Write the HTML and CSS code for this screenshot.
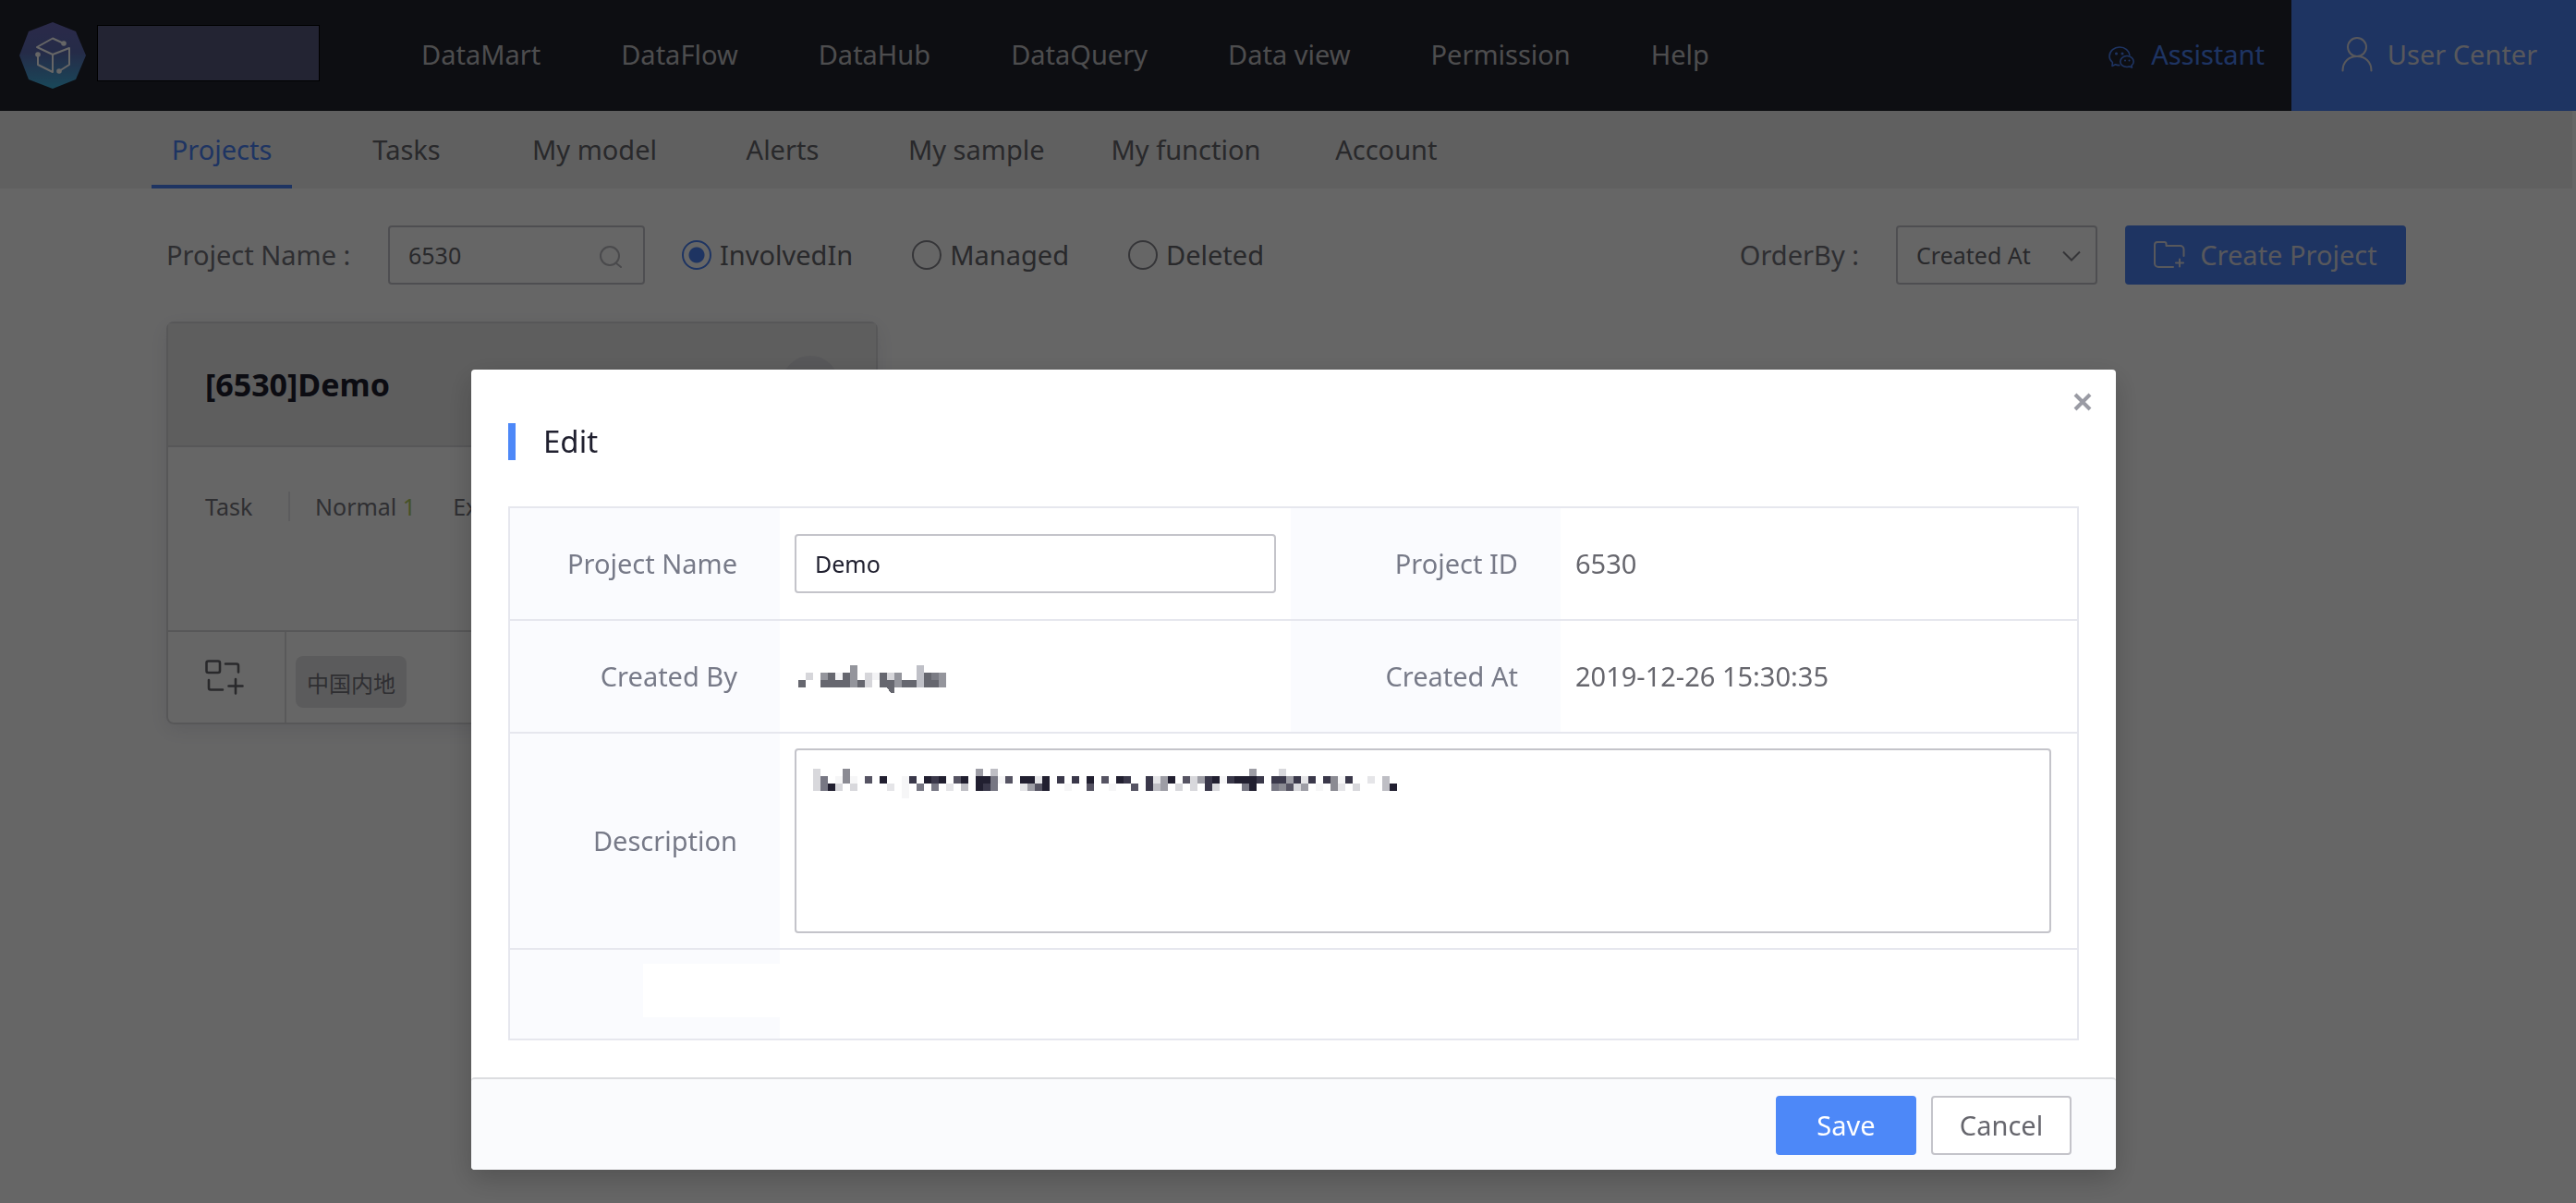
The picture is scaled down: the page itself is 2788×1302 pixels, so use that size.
FILE: index.html
```html
<!DOCTYPE html>
<html lang="en">
<head>
<meta charset="utf-8">
<title>Projects</title>
<meta name="viewport" content="width=device-width, initial-scale=1">
<link rel="stylesheet" href="styles.css">
</head>
<body>
<header class="topbar">
  <a class="brand" href="#" aria-label="Home">
    <svg class="brand-logo" viewBox="0 0 72 72" aria-hidden="true">
      <defs>
        <linearGradient id="logoFill" x1="0" y1="0" x2="0" y2="1">
          <stop offset="0" stop-color="#6b69b8"/>
          <stop offset="0.45" stop-color="#5d6cb4"/>
          <stop offset="1" stop-color="#40b4e0"/>
        </linearGradient>
      </defs>
      <path d="M36 0 61 10 72 36 61 62 36 72 10 62 0 36 10 10Z" fill="url(#logoFill)"/>
      <g fill="none" stroke="#fff" stroke-width="2" stroke-linejoin="round" stroke-linecap="round">
        <path d="M48 23 36 17.500 19 27 36 35 54 28 54 46 43 53"/>
        <path d="M36 35V54L20 46V35"/>
      </g>
      <g fill="#fff"><circle cx="48" cy="23" r="2.800"/><circle cx="20" cy="35" r="2.800"/><circle cx="43" cy="53" r="2.800"/></g>
    </svg>
    <span class="brand-name"></span>
  </a>
  <nav class="mainnav" aria-label="Main">
    <a href="#">DataMart</a>
    <a href="#">DataFlow</a>
    <a href="#">DataHub</a>
    <a href="#">DataQuery</a>
    <a href="#">Data view</a>
    <a href="#">Permission</a>
    <a href="#">Help</a>
  </nav>
  <a class="assistant" href="#">
    <svg class="icon-chat" viewBox="0 0 28 24" fill="none" stroke="currentColor" stroke-width="1.600" stroke-linejoin="round" aria-hidden="true">
      <path d="M12.500 20.500c-2 .3-3.500 0-5-.7L4 21.500l.4-4C2 15.500 1 13.500 1 11 1 5.500 6 1 12 1s10.500 4 11 9"/>
      <path d="M20 10.500c-4 0-7.200 2.800-7.200 6.200S16 22.500 20 22.500c1 0 1.800-.1 2.600-.4l2.800 1-.4-2.300c1.500-1.100 2.200-2.500 2.200-4.100 0-3.400-3.200-6.200-7.200-6.200Z"/>
      <g fill="currentColor" stroke="none"><circle cx="8.500" cy="8" r="1.500"/><circle cx="15" cy="8" r="1.500"/><circle cx="18" cy="15.500" r="1"/><circle cx="22.500" cy="15.500" r="1"/></g>
    </svg>
    Assistant
  </a>
  <a class="usercenter" href="#">
    <svg class="icon-user" viewBox="0 0 34 38" fill="none" stroke="currentColor" stroke-width="2" stroke-linecap="round" aria-hidden="true">
      <circle cx="17" cy="11" r="10"/>
      <path d="M1.500 36.500C1.500 27 8 21 17 21s15.500 6 15.500 15.500"/>
    </svg>
    User Center
  </a>
</header>

<nav class="subnav" aria-label="User center">
  <a class="active" href="#" aria-current="page">Projects</a>
  <a href="#">Tasks</a>
  <a href="#">My model</a>
  <a href="#">Alerts</a>
  <a href="#">My sample</a>
  <a href="#">My function</a>
  <a href="#">Account</a>
</nav>

<main class="content">
  <form class="filters">
    <label class="filter-label" for="search">Project Name :</label>
    <div class="searchbox">
      <input id="search" type="text" value="6530">
      <svg viewBox="0 0 26 24" fill="none" stroke="currentColor" stroke-width="2" stroke-linecap="round" aria-hidden="true">
        <circle cx="12" cy="11" r="10"/><path d="M18.500 18.500 24 23"/>
      </svg>
    </div>
    <div class="radios">
      <label><input type="radio" name="scope" checked>InvolvedIn</label>
      <label><input type="radio" name="scope">Managed</label>
      <label><input type="radio" name="scope">Deleted</label>
    </div>
    <label class="order-label" for="order">OrderBy :</label>
    <div class="selectbox">
      <select id="order"><option>Created At</option></select>
      <svg viewBox="0 0 20 12" fill="none" stroke="currentColor" stroke-width="2" aria-hidden="true"><path d="M1 1.500 10 10.500 19 1.500"/></svg>
    </div>
    <button class="create" type="button">
      <svg viewBox="0 0 34 30" fill="none" stroke="currentColor" stroke-width="2" stroke-linejoin="round" stroke-linecap="round" aria-hidden="true">
        <path d="M21 28H5a4 4 0 0 1-4-4V4a3 3 0 0 1 3-3h7.500a2 2 0 0 1 2 2v2h15a4 4 0 0 1 4 4v7"/>
        <path d="M28 19.500v8M24 23.500h8"/>
      </svg>
      Create Project
    </button>
  </form>

  <article class="card">
    <header class="card-head">
      <h2>[6530]Demo</h2>
      <span class="card-badge"></span>
    </header>
    <div class="card-body">
      <div class="stats">
        <span class="stat-name">Task</span>
        <span>Normal <b>1</b></span>
        <span>Exception</span>
      </div>
    </div>
    <footer class="card-foot">
      <a class="card-action" href="#" aria-label="Add node">
        <svg viewBox="0 0 42 38" fill="none" stroke="currentColor" stroke-width="2.600" stroke-linejoin="round" stroke-linecap="round" aria-hidden="true">
          <rect x="1.500" y="1.500" width="14.500" height="12.500" rx="2"/>
          <path d="M22 4.500H34a2 2 0 0 1 2 2V13.500M4 22v8.500a2 2 0 0 0 2 2H19M33 21v15.500M25.500 28.500H40.500"/>
        </svg>
      </a>
      <span class="tag" lang="zh">中国内地</span>
    </footer>
  </article>
</main>

<div class="overlay">
  <section class="modal" role="dialog" aria-modal="true" aria-labelledby="dialogTitle">
    <button class="close" type="button" aria-label="Close">
      <svg viewBox="0 0 20 20" fill="none" stroke="currentColor" stroke-width="4" aria-hidden="true"><path d="M2 2 18 18M18 2 2 18"/></svg>
    </button>
    <div class="modal-body">
      <h1 id="dialogTitle">Edit</h1>
      <table class="details">
        <colgroup><col class="col-label"><col class="col-value"><col class="col-label"><col></colgroup>
        <tbody>
        <tr>
          <th scope="row"><label for="name">Project Name</label></th>
          <td><input id="name" class="name" type="text" value="Demo"></td>
          <th scope="row">Project ID</th>
          <td>6530</td>
        </tr>
        <tr>
          <th scope="row">Created By</th>
          <td>
            <svg class="mosaic creator" viewBox="0 0 20 4" fill="none" shape-rendering="crispEdges" aria-hidden="true">
              <path stroke="#66676f" d="M0 2.500h1M3 2.500h4M8 2.500h1M4 1.500h1M6 1.500h1M11 1.500h1M11 2.500h2M14 2.500h2M17 1.500h1M17 2.500h1M18 2.500h1"/>
              <path stroke="#7b7c84" d="M18 1.500h1"/>
              <path stroke="#94959c" d="M3 1.500h1M7 .5h1M7 1.500h1M7 2.500h1M13 1.500h1M13 2.500h1M19 1.500h1M19 2.500h1"/>
              <path stroke="#bfc0c7" d="M16 .5h1M16 1.500h1M16 2.500h1"/>
              <path stroke="#d6d6da" d="M1 1.500h1M9 1.500h1M9 2.500h1M12 1.500h1"/>
              <path stroke="#f3f3f5" d="M5 1.500h1M10 1.500h1"/>
              <path fill="#66676f" stroke="none" d="M12 3h1v.700h-.5Z"/>
            </svg>
          </td>
          <th scope="row">Created At</th>
          <td>2019-12-26 15:30:35</td>
        </tr>
        <tr class="row-desc">
          <th scope="row"><label for="desc">Description</label></th>
          <td colspan="3">
            <div class="desc">
              <textarea id="desc"></textarea>
              <svg class="mosaic summary" viewBox="0 0 79 4" fill="none" shape-rendering="crispEdges" aria-hidden="true">
                <path stroke="#211f30" d="M9 1.500h1M15 1.500h1M17 1.500h1M20 1.500h1M22 1.500h2M28 1.500h2M31 1.500h1M37 1.500h1M41 1.500h1M48 1.500h1M54 1.500h1M57 1.500h3M2 2.500h1M22 2.500h1M31 2.500h1M59 2.500h1M78 2.500h1"/>
                <path stroke="#3a384a" d="M16 1.500h1M13 1.500h1M33 1.500h1M35 1.500h1M42 1.500h1M45 1.500h1M53 1.500h1M56 1.500h1M60 1.500h1M62 1.500h2M65 1.500h1M67 1.500h1M69 1.500h1M72 1.500h1M23 2.500h1M45 2.500h1M53 2.500h1"/>
                <path stroke="#565463" d="M7 1.500h1M19 1.500h1M26 1.500h1M39 1.500h1M50 1.500h1M30 2.500h1M37 2.500h1M43 2.500h1M64 2.500h1"/>
                <path stroke="#777783" d="M1 1.500h1M1 2.500h1M24 1.500h1M24 2.500h1M14 2.500h1M16 2.500h1M58 2.500h1M62 2.500h1"/>
                <path stroke="#8b8b93" d="M4 .5h1M4 1.500h1M70 1.500h1M70 2.500h1M63 2.500h1"/>
                <path stroke="#9d9da5" d="M22 .5h1M59 .5h1M47 1.500h1M47 2.500h1M52 1.500h1M64 1.500h1M29 2.500h1M66 2.500h1"/>
                <path stroke="#bebec4" d="M24 .5h1M77 1.500h1M77 2.500h1M20 2.500h1M46 2.500h1"/>
                <path stroke="#d8d8dc" d="M0 .5h1M0 1.500h1M0 2.500h1M63 .5h1M51 1.500h1M51 2.500h1M3 2.500h1M5 2.500h1M49 2.500h1M54 2.500h1M65 2.500h1M73 2.500h1"/>
                <path stroke="#e5e5e8" d="M30 1.500h1M46 1.500h1M66 1.500h1M75 1.500h1M10 2.500h1M18 2.500h1M28 2.500h1M71 2.500h1"/>
                <path stroke="#f6f6f7" d="M3 1.500h1M5 1.500h1M12 1.500h1M12 2.500h1M12 3.500h1M25 1.500h1M55 1.500h1M71 1.500h1M34 2.500h1M40 2.500h1M68 2.500h1"/>
              </svg>
            </div>
          </td>
        </tr>
        <tr class="row-last">
          <th class="blank"><div></div></th>
          <td colspan="3"></td>
        </tr>
        </tbody>
      </table>
    </div>
    <footer class="modal-foot">
      <button class="btn primary" type="button">Save</button>
      <button class="btn" type="button">Cancel</button>
    </footer>
  </section>
</div>
</body>
</html>
```
FILE: styles.css
```css
* { box-sizing: border-box; }

body {
  margin: 0;
  min-height: 100vh;
  background: #fff;
  color: #66666d;
  font: 29px/40px "Noto Sans", "Noto Sans CJK SC", sans-serif;
}
a { color: inherit; text-decoration: none; }
input, select, textarea, button { font: inherit; color: inherit; margin: 0; }
svg { display: block; flex: none; }

/* Top bar */
.topbar {
  display: flex;
  height: 120px;
  background: #21232f;
  color: #c0c0c4;
}
.brand { display: flex; align-items: center; gap: 12px; padding-left: 21px; width: 456px; }
.brand-logo { width: 72px; height: 72px; }
.brand-name {
  width: 241px;
  height: 61px;
  margin-bottom: 5px;
  background: #575a80;
  border: 1px solid #000;
}
.mainnav { display: flex; align-items: center; gap: 87px; flex: 1; padding-bottom: 2px; white-space: nowrap; }
.assistant {
  display: flex;
  align-items: center;
  gap: 18px;
  padding: 0 29px 2px 0;
  color: #4b82f5;
}
.icon-chat { width: 28px; height: 24px; margin-top: 5px; }
.usercenter {
  display: flex;
  align-items: center;
  justify-content: center;
  gap: 16px;
  width: 308px;
  padding: 0 0 2px 12px;
  background: #4b82f5;
  color: #dcdce6;
}
.icon-user { width: 34px; height: 38px; }

/* Section tabs */
.subnav {
  display: flex;
  gap: 48px;
  height: 84px;
  margin-right: 4px;
  padding-left: 164px;
  background: #f0f0f0;
}
.subnav a {
  display: flex;
  align-items: center;
  justify-content: center;
  min-width: 152px;
  padding: 0 12px;
  border: solid transparent;
  border-width: 4px 0;
  white-space: nowrap;
}
.subnav .active { color: #4b82f5; border-bottom-color: #4b82f5; }

/* Filters */
.content { padding: 40px 184px 40px 180px; }
.filters { display: flex; align-items: center; height: 64px; margin-bottom: 40px; white-space: nowrap; }
.filter-label { width: 240px; color: #73737c; }
.searchbox, .selectbox { position: relative; font-size: 25px; }
.searchbox { width: 278px; }
.selectbox { width: 218px; margin-right: 30px; }
.searchbox input, .selectbox select {
  display: block;
  width: 100%;
  height: 64px;
  padding: 0 20px;
  border: 2px solid #c4c4ca;
  border-radius: 4px;
  background: #fff;
  appearance: none;
}
.searchbox svg { position: absolute; right: 24px; top: 22px; width: 26px; height: 24px; color: #b8b8be; }
.selectbox svg { position: absolute; right: 18px; top: 27px; width: 20px; height: 12px; color: #84848c; pointer-events: none; }
.radios { display: flex; gap: 64px; flex: 1; padding-left: 40px; }
.radios label { display: flex; align-items: center; gap: 9px; }
.radios input {
  width: 32px;
  height: 32px;
  border: 2px solid #85858c;
  border-radius: 50%;
  appearance: none;
}
.radios input:checked {
  border-color: #4b82f5;
  background: radial-gradient(circle, #4b82f5 8px, transparent 9px);
}
.order-label { margin-right: 40px; color: #73737c; }
.create {
  display: flex;
  align-items: center;
  justify-content: center;
  gap: 16px;
  width: 304px;
  height: 64px;
  padding: 0;
  border: 0;
  border-radius: 4px;
  background: #4b82f5;
  color: #dcdce6;
}
.create svg { width: 34px; height: 30px; }

/* Project card */
.card {
  max-width: 770px;
  border: 2px solid #d9d9dc;
  border-radius: 8px;
  box-shadow: 0 6px 20px rgba(80, 80, 120, .12);
  color: #75757d;
  font-size: 25px;
}
.card-head {
  display: flex;
  align-items: center;
  justify-content: space-between;
  height: 134px;
  padding: 0 40px;
  border-bottom: 2px solid #d9d9dc;
  background: #ebebeb;
}
.card-head h2 { margin: 0; font-size: 34px; color: #20202f; }
.card-badge { width: 62px; height: 62px; border-radius: 50%; background: #dcdce0; }
.card-body { height: 198px; padding: 48px 40px; }
.stats { display: flex; gap: 40px; line-height: 32px; white-space: nowrap; }
.stat-name { width: 92px; margin-right: -13px; border-right: 2px solid #e6e6ea; }
.stats b { color: #b0cc60; font-weight: 400; }
.card-foot { display: flex; align-items: center; height: 100px; border-top: 2px solid #d9d9dc; }
.card-action { display: flex; align-items: center; width: 128px; height: 98px; padding-left: 40px; border-right: 2px solid #dedee2; color: #66666d; }
.card-action svg { width: 42px; height: 38px; }
.tag {
  margin: 10px 0 0 10px;
  padding: 10px 12px 6px;
  border-radius: 8px;
  background: #e4e4e6;
  font-size: 24px;
}

/* Dialog */
.overlay {
  position: fixed;
  inset: 0;
  display: flex;
  align-items: flex-start;
  justify-content: center;
  padding: 400px 0 36px 12px;
  background: rgba(0, 0, 0, .6);
  overflow: auto;
}
.modal {
  position: relative;
  width: 100%;
  max-width: 1780px;
  border-radius: 4px;
  background: #fff;
  box-shadow: 0 10px 30px rgba(0, 0, 0, .2);
}
.modal-body { padding: 58px 40px 40px; }
.modal h1 {
  margin: 0 0 50px;
  padding-left: 30px;
  border-left: 8px solid #4d88f8;
  color: #20202f;
  font-size: 33px;
  font-weight: 400;
  line-height: 40px;
}
.close { position: absolute; top: 15px; right: 16px; padding: 10px; border: 0; background: none; color: #9a9ba4; }
.close svg { width: 20px; height: 20px; }

.details { width: 100%; table-layout: fixed; border: 2px solid #e6e7ee; border-spacing: 0; }
.col-label { width: 292px; }
.col-value { width: 553px; }
.details th, .details td { height: 122px; padding: 0 16px; border-top: 2px solid #e6e7ee; }
.details tr:first-child > * { height: 120px; border-top: 0; }
.details th { padding-right: 46px; background: #fafbfe; color: #777a88; font-weight: 400; text-align: right; }
.details .row-desc > * { height: 234px; }
.details .row-desc td { padding-right: 28px; }
.details .row-last > * { height: 98px; }
.details .blank { padding: 0 0 0 144px; }
.blank div { height: 58px; margin-bottom: 8px; background: #fff; }
.name {
  display: block;
  width: 100%;
  height: 64px;
  padding: 0 20px;
  border: 2px solid #c4c4ca;
  border-radius: 4px;
  color: #20202f;
  font-size: 25px;
}
.desc { position: relative; }
.desc textarea {
  display: block;
  width: 100%;
  height: 200px;
  border: 2px solid #c4c4ca;
  border-radius: 4px;
  resize: none;
}
.mosaic path { stroke-width: 1; }
.creator { width: 160px; height: 32px; margin: 8px 0 0 4px; }
.summary { position: absolute; left: 20px; top: 22px; width: 632px; height: 32px; }

.modal-foot {
  display: flex;
  justify-content: flex-end;
  gap: 16px;
  height: 100px;
  padding: 18px 48px;
  border-top: 2px solid #dcdde0;
  border-radius: 4px;
  background: #fafbfd;
}
.btn { width: 152px; height: 64px; padding: 0; border: 2px solid #c4c4ca; border-radius: 4px; background: #fff; }
.btn.primary { border-color: #4d88f8; background: #4d88f8; color: #fff; }
```
